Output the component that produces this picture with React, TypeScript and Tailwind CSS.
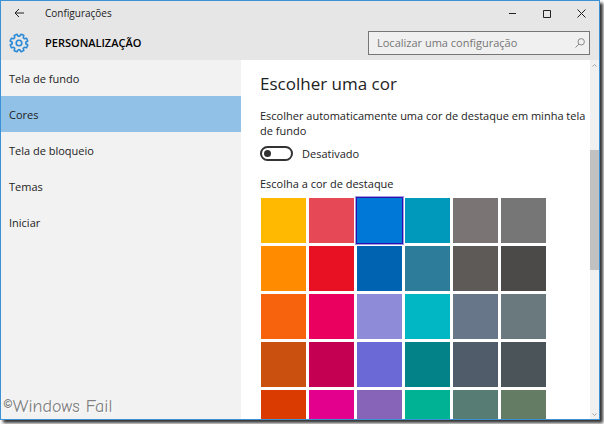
import { useState } from 'react'

const navItems = ['Tela de fundo', 'Cores', 'Tela de bloqueio', 'Temas', 'Iniciar']

const colors = [
  '#ffb900', '#e74856', '#0078d7', '#0099bc', '#7a7574', '#767676',
  '#ff8c00', '#e81123', '#0063b1', '#2d7d9a', '#5d5a58', '#4c4a48',
  '#f7630c', '#ea005e', '#8e8cd8', '#00b7c3', '#68768a', '#69797e',
  '#ca5010', '#c30052', '#6b69d6', '#038387', '#515c6b', '#4a5459',
  '#da3b01', '#e3008c', '#8764b8', '#00b294', '#567c73', '#647c64',
]

function GearIcon() {
  return (
    <svg viewBox="0 0 20 20" className="size-5 shrink-0" fill="none" stroke="#2a8ad8" strokeWidth="1.6" strokeLinejoin="round" aria-hidden="true">
      <path
        transform="rotate(22.5 10 10)"
        d="M8.500 1.100h3l.4 2.300 1.400.6 1.900-1.300 2.100 2.100-1.300 1.900.6 1.400 2.300.4v3l-2.300.4-.6 1.400 1.300 1.900-2.100 2.100-1.900-1.300-1.400.6-.4 2.300h-3l-.4-2.300-1.400-.6-1.900 1.300-2.100-2.100L4 13.300l-.6-1.400-2.300-.4v-3l2.300-.4L4 6.700 2.700 4.800l2.100-2.100L6.700 4l1.400-.6z"
      />
      <circle cx="10" cy="10" r="2.800" />
    </svg>
  )
}

function TitleBar() {
  return (
    <div className="flex h-6 items-center">
      <button type="button" aria-label="Voltar" className="flex h-full w-9 items-center justify-center">
        <svg viewBox="0 0 10 10" className="size-2.5" fill="none" stroke="#222" aria-hidden="true">
          <path d="M10 5H1M5 1 1 5l4 4" />
        </svg>
      </button>
      <span className="ml-2 flex-1 text-[10px] leading-4">Configurações</span>
      <button type="button" aria-label="Minimizar" className="flex h-full w-[34px] items-center justify-center">
        <svg viewBox="0 0 9 9" className="size-[9px]" stroke="#222" aria-hidden="true">
          <path d="M1 4.500h7" />
        </svg>
      </button>
      <button type="button" aria-label="Maximizar" className="flex h-full w-[34px] items-center justify-center">
        <svg viewBox="0 0 9 9" className="size-[9px]" fill="none" stroke="#222" aria-hidden="true">
          <path d="M1.500 1.500h7v7h-7z" />
        </svg>
      </button>
      <button type="button" aria-label="Fechar" className="flex h-full w-[36px] items-center justify-center">
        <svg viewBox="0 0 9 9" className="size-[9px]" fill="none" stroke="#222" aria-hidden="true">
          <path d="m.5.5 8 8M8.500.5l-8 8" />
        </svg>
      </button>
    </div>
  )
}

function Scrollbar() {
  return (
    <div className="flex w-[9px] shrink-0 flex-col bg-[#f0f0f0]">
      <button type="button" aria-label="Rolar para cima" className="flex h-2.5 items-center justify-center">
        <svg viewBox="0 0 5 3" className="h-[3px] w-[5px]" fill="none" stroke="#a0a0a0" aria-hidden="true">
          <path d="M.5 2.500l2-2 2 2" />
        </svg>
      </button>
      <div className="flex flex-1 flex-col">
        <div className="flex-[80]" />
        <div className="flex-[121] bg-[#c1c1c1]" />
        <div className="flex-[139]" />
      </div>
      <button type="button" aria-label="Rolar para baixo" className="flex h-2.5 items-center justify-center">
        <svg viewBox="0 0 5 3" className="h-[3px] w-[5px]" fill="none" stroke="#a0a0a0" aria-hidden="true">
          <path d="M.5.5l2 2 2-2" />
        </svg>
      </button>
    </div>
  )
}

export default function App() {
  const [page, setPage] = useState('Cores')
  const [auto, setAuto] = useState(false)
  const [accent, setAccent] = useState('#0078d7')

  return (
    <div className="h-screen overflow-hidden bg-white pr-1 pb-1 font-['Open_Sans','Noto_Sans',sans-serif]">
      <div className="relative flex h-full flex-col border border-[#3c91d6] bg-white text-[11px] leading-[15px] text-[#222] shadow-[3px_3px_3px_rgba(0,0,0,0.8)]">
        <header className="bg-[#e6e6e6]">
          <TitleBar />
          <div className="flex h-[35px] items-center pr-[9px] pl-2">
            <GearIcon />
            <h1 className="ml-4 flex-1 font-semibold text-black">PERSONALIZAÇÃO</h1>
            <label className="flex h-6 w-[222px] items-center border border-[#767676] bg-[#f0f0f0] pr-1 pl-2">
              <input
                type="text"
                aria-label="Localizar uma configuração"
                placeholder="Localizar uma configuração"
                className="min-w-0 flex-1 outline-none placeholder:text-[#767676]"
              />
              <svg viewBox="0 0 10 10" className="size-2.5" fill="none" stroke="#888" aria-hidden="true">
                <circle cx="6.200" cy="3.800" r="3.200" />
                <path d="M4 6 .5 9.500" />
              </svg>
            </label>
          </div>
        </header>

        <div className="flex min-h-0 flex-1">
          <nav className="w-60 shrink-0 bg-[#f2f2f2]">
            {navItems.map((item) => (
              <a
                key={item}
                href="#"
                onClick={() => setPage(item)}
                className={`flex h-9 items-center px-2 ${item === page ? 'bg-[#91c1e7]' : ''}`}
              >
                {item}
              </a>
            ))}
          </nav>

          <main className="min-w-0 flex-1 overflow-hidden pt-2.5 pl-[19px]">
            <h2 className="text-[17px] leading-7">Escolher uma cor</h2>
            <p className="mt-2.5">Escolher automaticamente uma cor de destaque em minha tela de fundo</p>
            <label className="mt-2 flex items-center gap-[9px]">
              <input
                type="checkbox"
                role="switch"
                checked={auto}
                onChange={(e) => setAuto(e.target.checked)}
                className="sr-only"
              />
              <span className={`flex h-[15px] w-[33px] items-center rounded-full border-2 border-[#333] px-0.5 ${auto ? 'justify-end' : ''}`}>
                <span className="size-[7px] rounded-full bg-[#333]" />
              </span>
              {auto ? 'Ativado' : 'Desativado'}
            </label>
            <fieldset className="mt-[15px]">
              <legend>Escolha a cor de destaque</legend>
              <div className="mt-[7px] grid grid-cols-[repeat(6,45px)] gap-[3px] pl-px">
                {colors.map((color) => (
                  <input
                    key={color}
                    type="radio"
                    name="accent"
                    aria-label={color}
                    checked={color === accent}
                    onChange={() => setAccent(color)}
                    style={{ backgroundColor: color }}
                    className="size-[45px] appearance-none outline-[#2a10b0] checked:shadow-[0_0_0_2px_#a99be0] checked:outline-1"
                  />
                ))}
              </div>
            </fieldset>
          </main>

          <Scrollbar />
        </div>

        <span className="absolute bottom-0 left-0.5 font-['Comic_Neue','Comic_Sans_MS',cursive] text-lg leading-6 text-[#808080] [text-shadow:1px_1px_0_white]">
          ©Windows Fail
        </span>
      </div>
    </div>
  )
}
